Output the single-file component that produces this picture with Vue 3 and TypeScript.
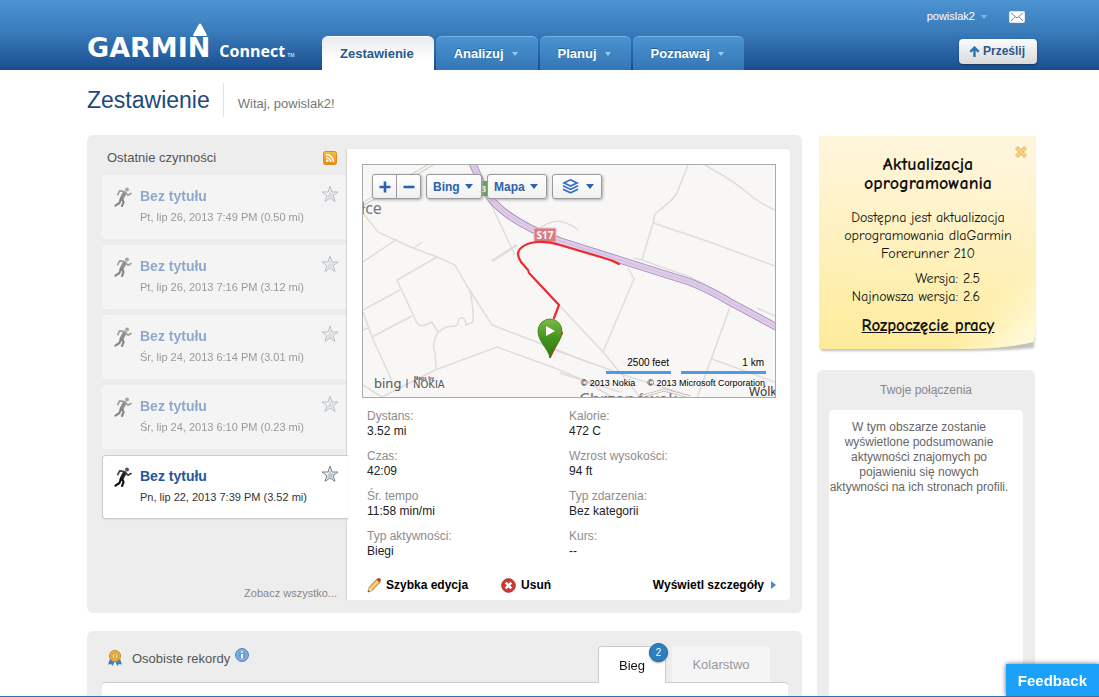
<script setup lang="ts">
import { ref } from 'vue'

interface Activity {
  id: number
  title: string
  date: string
}

interface Stat {
  label: string
  value: string
}

const navItems: string[] = ['Analizuj', 'Planuj', 'Poznawaj']

const activities: Activity[] = [
  { id: 1, title: 'Bez tytułu', date: 'Pt, lip 26, 2013 7:49 PM (0.50 mi)' },
  { id: 2, title: 'Bez tytułu', date: 'Pt, lip 26, 2013 7:16 PM (3.12 mi)' },
  { id: 3, title: 'Bez tytułu', date: 'Śr, lip 24, 2013 6:14 PM (3.01 mi)' },
  { id: 4, title: 'Bez tytułu', date: 'Śr, lip 24, 2013 6:10 PM (0.23 mi)' },
  { id: 5, title: 'Bez tytułu', date: 'Pn, lip 22, 2013 7:39 PM (3.52 mi)' },
]
const selected = ref<number>(5)

const stats: Stat[] = [
  { label: 'Dystans:', value: '3.52 mi' },
  { label: 'Kalorie:', value: '472 C' },
  { label: 'Czas:', value: '42:09' },
  { label: 'Wzrost wysokości:', value: '94 ft' },
  { label: 'Śr. tempo', value: '11:58 min/mi' },
  { label: 'Typ zdarzenia:', value: 'Bez kategorii' },
  { label: 'Typ aktywności:', value: 'Biegi' },
  { label: 'Kurs:', value: '--' },
]

const roads: string[] = [
  'M363 213 L378 232 L408 246 L437 257 L455 265 L467 286 L492 325 L542 344 L590 363',
  'M363 262 L397 239',
  'M415 247 L422 242',
  'M437 257 L397 280 L417 323 Q421 327 425 325 L432 322 L438 332 Q431 345 435 352 L436 370',
  'M438 332 L446 327 L455 326 Q458 326 459 319 Q463 316 465 320 L466 325 L473 322 Q474 310 470 291',
  'M363 310 L400 290',
  'M372 337 L412 316',
  'M363 312 L372 337 L392 381',
  'M363 330 L368 328',
  'M363 385 L382 397 L435 370 L497 347 L552 367 L586 381 L610 396',
  'M482 185 L515 255',
  'M537 230 Q552 219 563 222 Q572 225 578 230',
  'M688 165 L677 193 Q672 201 655 214 L653 223 L642 260',
  'M653 223 L704 240 L775 266',
  'M705 165 Q735 182 745 191 Q760 204 775 210',
  'M628 268 L634 279 L603 352',
  'M559 305 L603 352 L640 397',
  'M552 349 L633 378 L690 396',
  'M560 373 L620 392',
  'M730 307 L712 357 L697 398',
  'M712 359 L775 382',
  'M633 258 L642 260 L690 277 L730 298',
  'M757 308 L775 316',
]
const highway = 'M470 158 L480 180 L488 195 Q500 213 532 229 L560 241 L620 260 L690 282 Q710 290 730 302 L780 329'
</script>

<template>
  <div class="app">
    <header class="header">
      <a class="logo" href="#" aria-label="Garmin Connect">
        <span class="brand">GARMIN<svg class="delta" viewBox="0 0 16 14" aria-hidden="true"><path d="M7 1 Q8 0 9 1 L15 12 Q15 13 14 13 H2 Q1 13 1 12 Z" fill="#fff" /></svg></span>
        <span class="product">Connect</span><span class="tm">TM</span>
      </a>
      <nav class="nav">
        <a class="tab active" href="#">Zestawienie</a>
        <a v-for="item in navItems" :key="item" class="tab" href="#">
          {{ item }}
          <svg class="caret" viewBox="0 0 6 4" aria-hidden="true"><path d="M0 0 H6 L3 4 Z" fill="#9cc9ee" /></svg>
        </a>
      </nav>
      <div class="account">
        <div class="user">
          <button class="user-name" type="button">
            powislak2
            <svg class="caret" viewBox="0 0 6 4" aria-hidden="true"><path d="M0 0 H6 L3 4 Z" fill="#86b7e2" /></svg>
          </button>
          <a class="mail" href="#" aria-label="Wiadomości">
            <svg viewBox="0 0 16 12"><rect x="0.5" y="0.5" width="15" height="11" rx="1" fill="#fff" stroke="#e6e6e6" /><path d="M2 2 L8 7 L14 2 M2 10 L6 6 M14 10 L10 6" fill="none" stroke="#888" stroke-width="1" /></svg>
          </a>
        </div>
        <button class="upload" type="button">
          <svg viewBox="0 0 11 11" aria-hidden="true"><path d="M5.5 11 V2 M1.3 5.8 L5.5 1.6 L9.7 5.8" fill="none" stroke="#2a76b5" stroke-width="2.4" /></svg>
          Prześlij
        </button>
      </div>
    </header>

    <div class="heading">
      <h1>Zestawienie</h1>
      <p>Witaj, powislak2!</p>
    </div>

    <div class="columns">
      <main class="primary">
        <section class="panel recent">
          <div class="list-col">
            <div class="list-head">
              <h2>Ostatnie czynności</h2>
              <a href="#" class="rss" aria-label="RSS">
                <svg viewBox="0 0 14 14">
                  <defs><linearGradient id="rssFill" x1="0" y1="0" x2="0" y2="1"><stop offset="0" stop-color="#f8bd49" /><stop offset="1" stop-color="#ea8a0c" /></linearGradient></defs>
                  <rect x="0.5" y="0.5" width="13" height="13" rx="2" fill="url(#rssFill)" stroke="#dc8a1c" />
                  <circle cx="4.3" cy="9.8" r="1.3" fill="#fff" />
                  <path d="M3 6.4 A4.7 4.7 0 0 1 7.7 11 M3 3.6 A7.5 7.5 0 0 1 10.5 11" fill="none" stroke="#fff" stroke-width="1.5" />
                </svg>
              </a>
            </div>
            <ul class="activities">
              <li v-for="a in activities" :key="a.id" class="activity" :class="{ current: a.id === selected }" @click="selected = a.id">
                <svg class="runner" viewBox="0 0 18 20" aria-hidden="true">
                  <circle cx="13" cy="2.6" r="2" fill="#555" />
                  <path d="M10.6 6 L7.4 12" stroke="#222" stroke-width="3.8" stroke-linecap="round" fill="none" />
                  <path d="M11.5 5.8 L14 8.2 L17 6.4 M9.5 4.4 L5.6 3.8 L3.8 7.6" stroke="#444" stroke-width="1.7" fill="none" stroke-linecap="round" stroke-linejoin="round" />
                  <path d="M8 12 L9.6 15 L8 19 M7 12 L5.4 16 L1.4 18.6" stroke="#111" stroke-width="2.1" fill="none" stroke-linecap="round" stroke-linejoin="round" />
                </svg>
                <div class="activity-text">
                  <a href="#" class="activity-title">{{ a.title }}</a>
                  <span class="activity-date">{{ a.date }}</span>
                </div>
                <button class="star" type="button" aria-label="Ulubione">
                  <svg viewBox="0 0 18 18">
                    <path d="M9 1.2 L11 7 H17 L12.2 10.6 L14 16.4 L9 13 L4 16.4 L5.8 10.6 L1 7 H7 Z" fill="#f1f4f7" stroke="#77818c" />
                    <path d="M9 5 L10.3 8.4 L13.8 8.5 L11 10.4 L12 14 L9 11.8 L6 14 L7 10.4 Z" fill="#bcc6d0" />
                  </svg>
                </button>
              </li>
            </ul>
            <a href="#" class="see-all">Zobacz wszystko...</a>
          </div>

          <div class="detail">
            <div class="map">
              <svg class="map-art" viewBox="363 165 412 232" preserveAspectRatio="xMidYMid slice" aria-label="Mapa trasy">
                <defs>
                  <linearGradient id="pinFill" x1="0" y1="0" x2="0" y2="1"><stop offset="0" stop-color="#7cbb45" /><stop offset="0.5" stop-color="#43921d" /><stop offset="1" stop-color="#2f7a10" /></linearGradient>
                </defs>
                <rect x="363" y="165" width="412" height="232" fill="#f9f7f6" />
                <path v-for="(d, i) in roads" :key="i" :d="d" class="road" />
                <path d="M363 204 L432 164" stroke="#cfcdc8" stroke-width="4" />
                <path d="M363 204 L432 164" stroke="#f7f6f0" stroke-width="2" />
                <path d="M492 261 L517 245" stroke="#dedcda" stroke-width="2.5" />
                <path d="M640 397 L664 390 L690 397" fill="none" stroke="#bdb9b2" stroke-width="3" />
                <path d="M640 397 L664 390 L690 397" fill="none" stroke="#f7f6f0" stroke-width="1.4" />
                <path :d="highway" fill="none" stroke="#a78fb3" stroke-width="7.5" />
                <path :d="highway" fill="none" stroke="#dfcbea" stroke-width="5.7" />
                <path :d="highway" fill="none" stroke="#cbb7d8" stroke-width="0.8" />
                <rect x="480" y="181" width="9" height="15" rx="1" fill="#5f9f4f" />
                <text x="481" y="192" class="sign">3</text>
                <text x="361" y="214" class="place">łce</text>
                <text x="749" y="396" class="place dark">Wólk</text>
                <text x="579" y="405" class="place big">Chrzanówek</text>
                <rect x="534" y="228" width="22" height="14" rx="1" fill="#db7a82" stroke="#efc3c6" />
                <text x="545" y="239" text-anchor="middle" class="shield">S17</text>
                <path d="M619 264 Q612 260 604 258 L560 245 Q548 241 537 242 Q526 243 521 248 Q515 253 521 262 L528 270 L529 273 L559 305 L554 318 M562 333 L550 357" fill="none" stroke="#ee2a30" stroke-width="2.2" stroke-linejoin="round" stroke-linecap="round" />
                <path d="M550 358 C548 348 538 342 538 331 A12 12 0 0 1 562 331 C562 342 552 348 550 358 Z" fill="url(#pinFill)" stroke="#3b7d1c" stroke-width="0.8" />
                <path d="M546 326 L555 331 L546 336 Z" fill="#fff" />
                <text x="374" y="388" class="bing">bing</text>
                <path d="M407 379 V388" stroke="#555" stroke-width="1" />
                <text x="414" y="380" class="maps-by">Maps by</text>
                <text x="413" y="388" class="nokia">NOKIA</text>
              </svg>

              <div class="map-tools">
                <div class="zoom">
                  <button type="button" aria-label="Przybliż"><svg viewBox="0 0 12 12"><path d="M6 0.5 V11.5 M0.5 6 H11.5" stroke="#2a62ad" stroke-width="2.6" /></svg></button>
                  <button type="button" aria-label="Oddal"><svg viewBox="0 0 12 12"><path d="M0.5 6 H11.5" stroke="#2a62ad" stroke-width="2.6" /></svg></button>
                </div>
                <div class="drop">
                  <select aria-label="Dostawca map"><option>Bing</option></select>
                  <svg class="drop-arrow" viewBox="0 0 8 5"><path d="M0 0 H8 L4 5 Z" fill="#2a62ad" /></svg>
                </div>
                <div class="drop">
                  <select aria-label="Typ mapy"><option>Mapa</option></select>
                  <svg class="drop-arrow" viewBox="0 0 8 5"><path d="M0 0 H8 L4 5 Z" fill="#2a62ad" /></svg>
                </div>
                <button class="layers" type="button" aria-label="Warstwy">
                  <svg class="layers-icon" viewBox="0 0 17 15"><path d="M8.5 0.8 L15 3.9 L8.5 7 L2 3.9 Z M1 6.8 L8.5 10.4 L16 6.8 M1 10.2 L8.5 13.8 L16 10.2" fill="none" stroke="#3470bd" stroke-width="1.7" /></svg>
                  <svg class="drop-caret" viewBox="0 0 8 5"><path d="M0 0 H8 L4 5 Z" fill="#2a62ad" /></svg>
                </button>
              </div>

              <div class="map-legend">
                <div class="scales">
                  <span class="scale feet">2500 feet</span>
                  <span class="scale km">1 km</span>
                </div>
                <div class="credits"><span>© 2013 Nokia</span><span>© 2013 Microsoft Corporation</span></div>
              </div>
            </div>

            <dl class="stats">
              <div v-for="s in stats" :key="s.label">
                <dt>{{ s.label }}</dt>
                <dd>{{ s.value }}</dd>
              </div>
            </dl>

            <div class="actions">
              <a href="#" class="edit">
                <svg viewBox="0 0 14 16" aria-hidden="true">
                  <path d="M1 15 L2 10.5 L9.5 2.5 L12.8 5.5 L5.2 13.6 Z" fill="#f3b54a" stroke="#a8742a" stroke-width="0.8" />
                  <path d="M1 15 L2 10.5 L5.2 13.6 Z" fill="#f4dcb4" /><path d="M1 15 L1.5 12.9 L2.8 14.3 Z" fill="#333" />
                  <path d="M3.5 12 L11 4" stroke="#fbe09a" stroke-width="1.2" />
                  <path d="M9.5 2.5 L10.8 1.2 Q12 0.4 13.2 1.6 Q14.3 2.8 13.6 4.2 L12.8 5.5 Z" fill="#c33d3d" />
                </svg>Szybka edycja</a>
              <a href="#" class="remove">
                <svg viewBox="0 0 15 15" aria-hidden="true"><circle cx="7.5" cy="7.5" r="6.8" fill="#d2382f" stroke="#a3332c" /><path d="M4.7 4.7 L10.3 10.3 M10.3 4.7 L4.7 10.3" stroke="#fff" stroke-width="2.5" /></svg>Usuń</a>
              <a href="#" class="details">Wyświetl szczegóły<svg viewBox="0 0 5 8" aria-hidden="true"><path d="M0 0 L5 4 L0 8 Z" fill="#3d8ed4" /></svg></a>
            </div>
          </div>
        </section>

        <section class="panel records">
          <div class="records-head">
            <svg class="medal" viewBox="0 0 16 16" aria-hidden="true">
              <path d="M3 9 L1 14.6 L4 14 L5.6 16 L8 11 L10.4 16 L12 14 L15 14.6 L13 9 Z" fill="#3b7fc0" />
              <circle cx="8" cy="6" r="5.6" fill="#e8b23e" stroke="#b98422" stroke-width="0.8" />
              <circle cx="8" cy="6" r="3.2" fill="#f6d67c" stroke="#c2902e" stroke-width="0.9" />
              <path d="M8 4.2 V7.8" stroke="#b98422" stroke-width="1.2" />
            </svg>
            <h2>Osobiste rekordy</h2>
            <button class="info" type="button" aria-label="Informacje">
              <svg viewBox="0 0 14 14"><circle cx="7" cy="7" r="6.4" fill="#6da0d3" stroke="#4c7db5" /><circle cx="7" cy="7" r="5" fill="none" stroke="#a4c6e8" stroke-width="0.8" /><path d="M7 6 V10.6 M7 3.2 V4.8" stroke="#fff" stroke-width="1.8" /></svg>
            </button>
            <div class="record-tabs">
              <button class="record-tab on" type="button">Bieg<span class="badge">2</span></button>
              <button class="record-tab" type="button">Kolarstwo</button>
            </div>
          </div>
          <div class="records-body"></div>
        </section>
      </main>

      <aside class="aside">
        <section class="note">
          <svg class="note-paper" viewBox="0 0 218 216" preserveAspectRatio="none" aria-hidden="true">
            <defs>
              <linearGradient id="paper" x1="0.1" y1="0" x2="0" y2="1"><stop offset="0" stop-color="#fef6dc" /><stop offset="0.5" stop-color="#fef1bd" /><stop offset="1" stop-color="#feeb99" /></linearGradient>
              <linearGradient id="curl" x1="0" y1="0" x2="1" y2="1"><stop offset="0.78" stop-color="#fff8cf" stop-opacity="0" /><stop offset="0.95" stop-color="#fff9d8" /></linearGradient>
              <filter id="soft"><feGaussianBlur stdDeviation="1" /></filter>
            </defs>
            <path d="M2 4 H216 V190 L215 211 L190 213 L150 214 H2 Z" fill="#000" opacity="0.24" filter="url(#soft)" />
            <path d="M0 0 H217 V178 Q217 200 214 205 Q190 211 150 212 H0 Z" fill="url(#paper)" />
            <path d="M0 0 H217 V178 Q217 200 214 205 Q190 211 150 212 H0 Z" fill="url(#curl)" />
          </svg>
          <button class="close" type="button" aria-label="Zamknij">
            <svg viewBox="0 0 14 14"><path d="M2.4 2.4 L11.6 11.6 M11.6 2.4 L2.4 11.6" stroke="#e2b45c" stroke-width="4" /><path d="M2.6 2.6 L11.4 11.4 M11.4 2.6 L2.6 11.4" stroke="#f8cf80" stroke-width="2.6" /></svg>
          </button>
          <h2>Aktualizacja oprogramowania</h2>
          <p>Dostępna jest aktualizacja oprogramowania dlaGarmin Forerunner 210</p>
          <dl class="versions">
            <dt>Wersja:</dt><dd>2.5</dd>
            <dt>Najnowsza wersja:</dt><dd>2.6</dd>
          </dl>
          <a href="#" class="start">Rozpoczęcie pracy</a>
        </section>

        <section class="panel connections">
          <h2>Twoje połączenia</h2>
          <div class="connections-body">
            <p>W tym obszarze zostanie wyświetlone podsumowanie aktywności znajomych po pojawieniu się nowych aktywności na ich stronach profili.</p>
          </div>
        </section>
      </aside>
    </div>

    <div class="dock"><button class="feedback" type="button">Feedback</button></div>
  </div>
</template>

<style>
html,
body {
  margin: 0;
  background: #fff;
}
</style>

<style scoped>
* {
  box-sizing: border-box;
}
.app {
  height: 100vh;
  overflow: hidden;
  font-family: "Liberation Sans", Arial, sans-serif;
  font-size: 12px;
  line-height: 15px;
  color: #222;
}
h1, h2, p, ul, dl, dd {
  margin: 0;
  padding: 0;
  font-weight: normal;
}
svg {
  display: block;
  flex: none;
}
a {
  color: inherit;
  text-decoration: none;
}
button {
  padding: 0;
  border: 0;
  background: none;
  font: inherit;
  color: inherit;
}

/* Header */
.header {
  display: flex;
  align-items: flex-end;
  height: 70px;
  padding: 0 62px 0 87px;
  background: linear-gradient(#4c94d1, #3a7cbc 45%, #1a5090);
  border-bottom: 1px solid #174a86;
}
.logo {
  display: flex;
  align-items: baseline;
  width: 235px;
  padding-bottom: 6px;
  color: #fff;
}
.brand {
  position: relative;
  font: bold 27px/30px "DejaVu Sans", Verdana, sans-serif;
}
.delta {
  position: absolute;
  right: 2px;
  top: -10px;
  width: 16px;
  height: 14px;
}
.product {
  margin-left: 9px;
  font: bold 16px/24px "Open Sans", "Noto Sans", sans-serif;
}
.tm {
  margin-left: 2px;
  font-size: 5px;
  line-height: 6px;
}
.nav {
  display: flex;
  gap: 2px;
  margin-bottom: -1px;
}
.tab {
  display: flex;
  align-items: center;
  gap: 8px;
  height: 34px;
  padding: 0 20px 0 18px;
  border-top: 1px solid #78b4e4;
  border-radius: 6px 6px 0 0;
  background: linear-gradient(#4a93d2, #3576b6);
  color: #fff;
  font-size: 13px;
  font-weight: bold;
  text-shadow: 0 -1px 1px #1f5a94;
}
.tab.active {
  border-top-color: #fff;
  background: linear-gradient(#e9ebee, #fff 70%);
  color: #28598f;
  text-shadow: none;
}
.caret {
  width: 6px;
  height: 4px;
}
.account {
  display: flex;
  flex-direction: column;
  align-items: flex-end;
  gap: 15px;
  margin-left: auto;
  padding-bottom: 5px;
}
.user {
  display: flex;
  align-items: center;
  gap: 22px;
  padding-right: 12px;
  color: #fff;
  font-size: 11px;
}
.user-name {
  display: flex;
  align-items: center;
  gap: 6px;
}
.mail svg {
  width: 16px;
  height: 12px;
}
.upload {
  display: flex;
  align-items: center;
  gap: 3px;
  height: 25px;
  padding: 0 12px 0 10px;
  border-radius: 4px;
  background: linear-gradient(#fbfbfb, #dadada);
  box-shadow: 0 1px 2px #12365f;
  color: #28598f;
  font-size: 12px;
  font-weight: bold;
}
.upload svg {
  width: 11px;
  height: 11px;
}

/* Page heading */
.heading {
  display: flex;
  align-items: center;
  height: 65px;
  padding: 0 63px 5px 87px;
}
.heading h1 {
  padding-right: 13px;
  color: #1c4a7e;
  font-size: 23px;
  line-height: 34px;
}
.heading p {
  padding: 10px 0 2px 14px;
  border-left: 1px solid #e2e2e2;
  color: #777;
  font-size: 13px;
  line-height: 22px;
}

/* Columns */
.columns {
  display: grid;
  grid-template-columns: minmax(0, 1fr) 218px;
  gap: 15px;
  align-items: start;
  padding: 0 64px 0 87px;
}
.panel {
  border-radius: 6px;
  background: #ededed;
}
.primary {
  display: grid;
  gap: 18px;
}
.recent {
  display: grid;
  grid-template-columns: 245px minmax(0, 1fr);
  padding: 14px 12px 13px 15px;
}
.list-col {
  display: flex;
  flex-direction: column;
}
.list-head {
  display: flex;
  align-items: center;
  justify-content: space-between;
  height: 26px;
  padding: 0 10px 9px 5px;
}
h2 {
  color: #555;
  font-size: 13px;
}
.rss svg {
  width: 14px;
  height: 14px;
}
.activities {
  display: grid;
  gap: 6px;
  list-style: none;
}
.activity {
  display: flex;
  align-items: flex-start;
  height: 64px;
  padding: 9px 8px 0 11px;
  border: 1px solid #f4f4f4;
  border-right: 0;
  border-radius: 4px 0 0 4px;
  background: #f4f4f4;
}
.activity > * {
  opacity: 0.48;
}
.activity.current {
  position: relative;
  z-index: 1;
  margin-right: -1px;
  padding-right: 9px;
  border-color: #ccc;
  background: #fff;
  box-shadow: 0 1px 1px #ddd;
}
.activity.current > * {
  opacity: 1;
}
.runner {
  width: 18px;
  height: 20px;
  margin-top: 2px;
}
.activity-text {
  display: flex;
  flex: 1;
  flex-direction: column;
  gap: 5px;
  padding: 2px 0 0 8px;
}
.activity-title {
  color: #23569b;
  font-size: 14px;
  font-weight: bold;
  line-height: 18px;
}
.activity-date {
  color: #333;
  font-size: 11px;
  white-space: nowrap;
}
.star svg {
  width: 18px;
  height: 18px;
}
.see-all {
  margin-top: auto;
  padding: 0 10px 0 0;
  color: #888;
  font-size: 11px;
  line-height: 14px;
  text-align: right;
}

/* Activity detail */
.detail {
  padding: 15px 14px 5px 15px;
  border-radius: 0 4px 4px 0;
  background: #fff;
  box-shadow: -1px 0 1px #d4d4d4;
}
.map {
  position: relative;
  height: 234px;
  border: 1px solid #aaa;
  overflow: hidden;
}
.map-art {
  width: 100%;
  height: 100%;
}
.road {
  fill: none;
  stroke: #dfdddb;
  stroke-width: 1.5;
}
.place {
  fill: #777;
  font: 16px "Noto Sans", sans-serif;
}
.place.dark {
  fill: #333;
  font-size: 12px;
}
.place.big {
  fill: #777;
  font-size: 17px;
}
.sign {
  fill: #fff;
  font: bold 9px "Noto Sans", sans-serif;
}
.shield {
  fill: #fff;
  font: bold 10px "Noto Sans", sans-serif;
}
.bing {
  fill: #555;
  font: 13px "Noto Sans", sans-serif;
}
.maps-by {
  fill: #555;
  font: bold 5px "Liberation Sans", sans-serif;
}
.nokia {
  fill: #555;
  font: 10px "DejaVu Sans", sans-serif;
}
.map-tools {
  position: absolute;
  top: 9px;
  left: 9px;
  display: flex;
  gap: 5px;
  height: 25px;
}
.zoom, .drop, .layers {
  display: flex;
  border: 1px solid #999;
  border-radius: 3px;
  background: linear-gradient(#fff, #f0f0f0);
  box-shadow: 1px 1px 3px #aaa;
}
.zoom button {
  display: grid;
  place-items: center;
  width: 23px;
}
.zoom button + button {
  width: 24px;
  border-left: 1px solid #999;
}
.zoom svg {
  width: 12px;
  height: 12px;
}
.drop {
  position: relative;
}
.drop select {
  appearance: none;
  border: 0;
  padding: 0 21px 0 6px;
  background: transparent;
  color: #2a62ad;
  font: bold 12px "Liberation Sans", Arial, sans-serif;
}
.drop-arrow {
  position: absolute;
  top: 9px;
  right: 8px;
  width: 8px;
  height: 5px;
  pointer-events: none;
}
.layers {
  align-items: center;
  gap: 7px;
  padding: 0 7px 0 9px;
}
.layers-icon {
  width: 17px;
  height: 15px;
}
.drop-caret {
  width: 8px;
  height: 5px;
}
.map-legend {
  position: absolute;
  right: 9px;
  bottom: 6px;
  color: #000;
  font-size: 10px;
}
.scales {
  display: flex;
  justify-content: flex-end;
  gap: 10px;
}
.scale {
  padding: 0 2px 1px;
  border-bottom: 3px solid #4d9be4;
  text-align: right;
}
.feet {
  width: 65px;
}
.km {
  width: 85px;
}
.credits {
  display: flex;
  gap: 12px;
  padding: 2px 1px 0 0;
  font-size: 9px;
}
.stats {
  display: grid;
  grid-template-columns: 202px 1fr;
  row-gap: 10px;
  padding: 11px 0 0 5px;
}
.stats dt {
  color: #8c8c8c;
}
.actions {
  display: flex;
  align-items: center;
  padding: 16px 0 0 5px;
  color: #000;
  font-weight: bold;
}
.actions a {
  display: flex;
  align-items: center;
  gap: 5px;
  height: 20px;
}
.edit svg {
  width: 14px;
  height: 16px;
}
.actions .remove {
  margin-left: 33px;
}
.remove svg {
  width: 15px;
  height: 15px;
}
.actions .details {
  gap: 7px;
  margin-left: auto;
}
.details svg {
  width: 5px;
  height: 8px;
}

/* Personal records */
.records {
  padding: 15px 14px 0 15px;
}
.records-head {
  display: flex;
  align-items: flex-start;
  height: 36px;
  padding: 0 18px 0 5px;
}
.medal {
  width: 16px;
  height: 16px;
  margin-top: 4px;
}
.records-head h2 {
  padding: 5px 5px 0 9px;
}
.info {
  padding-top: 2px;
}
.info svg {
  width: 14px;
  height: 14px;
}
.record-tabs {
  display: flex;
  gap: 6px;
  height: 36px;
  margin-left: auto;
}
.record-tab {
  position: relative;
  width: 98px;
  border-radius: 4px 4px 0 0;
  background: #f5f5f5;
  color: #999;
  font-size: 13px;
}
.record-tab.on {
  z-index: 1;
  width: 68px;
  margin-bottom: -1px;
  border: 1px solid #ccc;
  border-bottom: 0;
  background: #fff;
  color: #111;
}
.badge {
  position: absolute;
  top: -4px;
  right: -3px;
  width: 19px;
  height: 19px;
  border: 1px solid #1a649f;
  border-radius: 50%;
  background: #2c80c0;
  box-shadow: 0 1px 2px #999;
  color: #fff;
  font-size: 10px;
  line-height: 17px;
}
.records-body {
  min-height: 200px;
  border-top: 1px solid #ccc;
  border-radius: 4px 4px 0 0;
  background: #fff;
}

/* Sidebar */
.note {
  position: relative;
  margin: 1px -2px 0 2px;
  padding: 19px 15px 13px;
  color: #111;
  font: 14px/18px "Comic Sans MS", "Comic Neue", "Noto Sans", sans-serif;
  text-align: center;
}
.note > * {
  position: relative;
}
.note .note-paper {
  position: absolute;
  inset: 0;
  width: 100%;
  height: 100%;
}
.note .close {
  position: absolute;
  top: 9px;
  right: 9px;
}
.close svg {
  width: 14px;
  height: 14px;
}
.note h2 {
  padding: 0 18px;
  color: #111;
  font-size: 18px;
  font-weight: bold;
  line-height: 19px;
}
.note p {
  padding-top: 16px;
}
.versions {
  display: grid;
  grid-template-columns: 124px auto;
  column-gap: 5px;
  padding-top: 7px;
  text-align: left;
}
.versions dt {
  text-align: right;
  white-space: nowrap;
}
.start {
  display: block;
  padding: 11px 0 5px;
  font-size: 17px;
  font-weight: bold;
  text-decoration: underline;
}
.connections {
  margin-top: 17px;
  padding: 0 12px;
}
.connections h2 {
  height: 40px;
  color: #888;
  font-size: 12px;
  line-height: 40px;
  text-align: center;
}
.connections-body {
  min-height: 400px;
  padding: 10px 14px 0 0;
  border-radius: 4px 4px 0 0;
  background: #fff;
  color: #666;
  text-align: center;
}

/* Feedback dock */
.dock {
  position: fixed;
  right: 0;
  bottom: 0;
  left: 0;
  display: flex;
  justify-content: flex-end;
  border-bottom: 1px solid #2b6fb8;
}
.feedback {
  height: 32px;
  padding: 0 12px;
  background: #1ca1fb;
  box-shadow: 0 0 5px #666;
  color: #fff;
  font-size: 15px;
  font-weight: bold;
}
</style>
